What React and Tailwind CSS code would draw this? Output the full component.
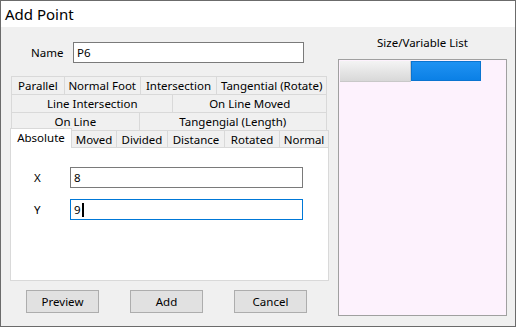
import React from "react";

const font = { fontFamily: '"Noto Sans", "Open Sans", sans-serif' };

function Tab({ label, w }) {
  return (
    <div
      className="h-[18px] flex items-center justify-center border-r border-t border-[#d9d9d9] bg-[#f0f0f0] text-[11.5px] text-black whitespace-nowrap"
      style={{ width: w }}
    >
      {label}
    </div>
  );
}

export default function App() {
  return (
    <div
      className="w-[516px] h-[327px] bg-[#f0f0f0] border border-[#6b6b6b] flex flex-col overflow-hidden"
      style={font}
    >
      <div className="h-[26px] bg-white flex items-center pl-[4px] text-[15px] text-black leading-none shrink-0">
        Add Point
      </div>
      <div className="flex flex-1 text-[11.5px]">
        <div className="w-[330px] flex flex-col">
          <div className="flex items-center mt-[15px] h-[21px]">
            <span className="w-[72px] pl-[30px]">Name</span>
            <div className="w-[231px] h-[21px] border border-[#7a7a7a] bg-white flex items-center px-[3px]">
              P6
            </div>
          </div>
          <div className="ml-[10px] mt-[13px] w-[316px] border-l border-[#d9d9d9]">
            <div className="flex">
              <Tab label="Parallel" w={53} />
              <Tab label="Normal Foot" w={76} />
              <Tab label="Intersection" w={77} />
              <Tab label="Tangential (Rotate)" w={110} />
            </div>
            <div className="flex">
              <Tab label="Line Intersection" w={162} />
              <Tab label="On Line Moved" w={154} />
            </div>
            <div className="flex">
              <Tab label="On Line" w={128} />
              <Tab label="Tangengial (Length)" w={188} />
            </div>
          </div>
          <div className="ml-[9px] w-[319px] flex">
            <div className="h-[20px] w-[62px] -mt-[2px] bg-white border-t border-l border-r border-[#d9d9d9] flex items-center justify-center relative z-10 pb-[1px]">
              Absolute
            </div>
            <div className="flex h-[18px] flex-1 bg-[#f0f0f0]">
              <Tab label="Moved" w={45} />
              <Tab label="Divided" w={51} />
              <Tab label="Distance" w={57} />
              <Tab label="Rotated" w={55} />
              <div className="flex items-center justify-center border-t border-r border-[#d9d9d9] flex-1">Normal</div>
            </div>
          </div>
          <div className="ml-[9px] w-[319px] h-[134px] -mt-[1px] bg-white border border-[#d9d9d9] flex flex-col pt-[19px]">
            <div className="flex items-center h-[21px]">
              <span className="w-[59px] pl-[23px]">X</span>
              <div className="w-[233px] h-[21px] border border-[#7a7a7a] bg-white flex items-center px-[3px]">
                8
              </div>
            </div>
            <div className="flex items-center h-[21px] mt-[11px]">
              <span className="w-[59px] pl-[23px]">Y</span>
              <div className="w-[233px] h-[21px] border border-[#0078d7] bg-white flex items-center px-[3px]">
                9<span className="inline-block w-[2px] h-[14px] bg-black ml-[1px]" />
              </div>
            </div>
          </div>
          <div className="flex mt-[9px] pl-[25px] gap-[31px]">
            {["Preview", "Add", "Cancel"].map((b) => (
              <div
                key={b}
                className="w-[73px] h-[23px] bg-[#e1e1e1] border border-[#adadad] flex items-center justify-center text-black"
              >
                {b}
              </div>
            ))}
          </div>
        </div>
        <div className="flex flex-col pl-[7px]">
          <div className="h-[32px] w-[169px] flex items-center justify-center text-black">
            Size/Variable List
          </div>
          <div className="w-[169px] h-[257px] border border-[#a0a0a0] bg-[#fdf2fd] p-[1px]">
            <div className="flex h-[21px]">
              <div className="w-[71px] h-[21px] bg-gradient-to-b from-[#f4f4f4] to-[#d8d8d8] border-r border-b border-[#c8c8c8]" />
              <div className="w-[70px] h-[20px] bg-gradient-to-b from-[#1e92f2] to-[#0a80e6] border border-[#0a74d0]" />
            </div>
          </div>
        </div>
      </div>
    </div>
  );
}
